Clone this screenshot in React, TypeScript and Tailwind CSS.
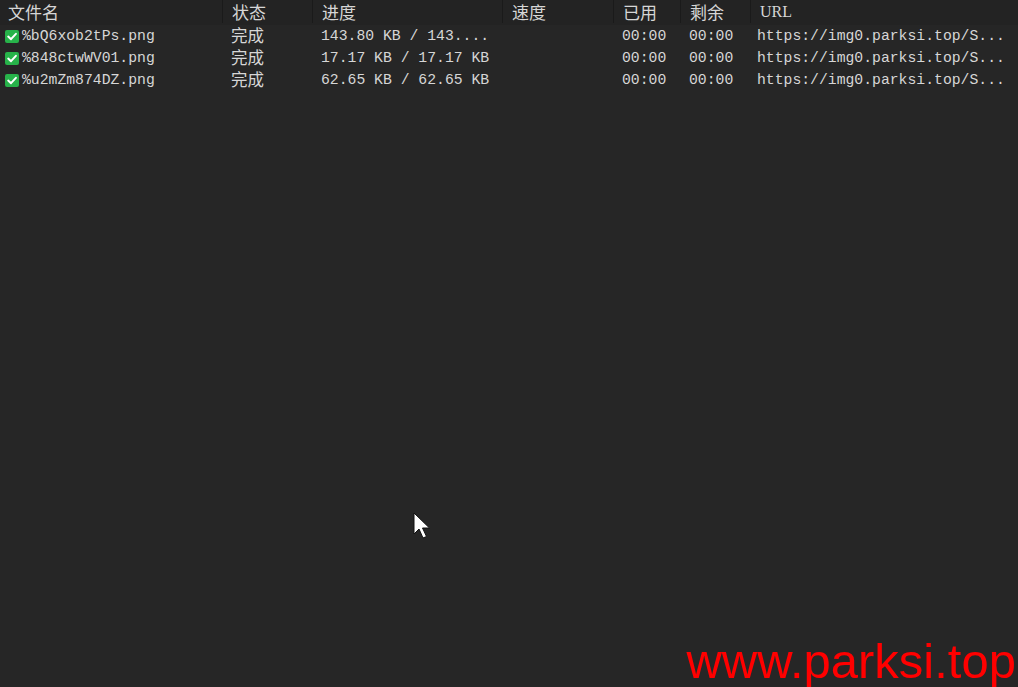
import React from 'react';

type Row = { name: string; status: string; progress: string; speed: string; used: string; left: string; url: string };

const rows: Row[] = [
  { name: '%bQ6xob2tPs.png', status: '完成', progress: '143.80 KB / 143....', speed: '', used: '00:00', left: '00:00', url: 'https://img0.parksi.top/S...' },
  { name: '%848ctwWV01.png', status: '完成', progress: '17.17 KB / 17.17 KB', speed: '', used: '00:00', left: '00:00', url: 'https://img0.parksi.top/S...' },
  { name: '%u2mZm874DZ.png', status: '完成', progress: '62.65 KB / 62.65 KB', speed: '', used: '00:00', left: '00:00', url: 'https://img0.parksi.top/S...' },
];

const headers = ['文件名', '状态', '进度', '速度', '已用', '剩余', 'URL'];
const widths = ['w-[222px]', 'w-[90px]', 'w-[190px]', 'w-[111px]', 'w-[67px]', 'w-[70px]', 'flex-1'];

const mono = "font-['Liberation_Mono',monospace] text-[14.75px]";
const cjk = "font-['Noto_Sans_CJK_SC',sans-serif] text-[17px]";

const CheckIcon: React.FC = () => (
  <svg width="14" height="13" viewBox="0 0 14 13" className="shrink-0">
    <rect x="0" y="0" width="14" height="13" rx="2" fill="#27b34a" />
    <path d="M3.2 6.6 L6 9.2 L10.9 3.8" stroke="#fff" strokeWidth="2" fill="none" strokeLinecap="round" strokeLinejoin="round" />
  </svg>
);

const Cursor: React.FC = () => (
  <svg width="20" height="30" viewBox="0 0 20 30" className="absolute left-[413px] top-[512px]">
    <path d="M1 1 L1 22 L6 17 L10 26 L13.5 24.5 L9.5 16 L16.5 16 Z" fill="#fff" stroke="#111" strokeWidth="1" />
  </svg>
);

export default function App() {
  return (
    <div className="relative w-[1018px] h-[687px] overflow-hidden bg-[#262626] text-[#d6d6d6]">
      {/* Header */}
      <div className="flex h-[25px] pb-[2px] bg-[#232323]">
        {headers.map((h, i) => (
          <div
            key={h}
            className={`${widths[i]} flex items-center ${i === 0 ? 'pl-[8px]' : 'pl-[9px] border-l border-[#1a1a1a]'} ${h === 'URL' ? "font-['Liberation_Serif',serif] text-[16px]" : cjk} leading-none`}
          >
            {h}
          </div>
        ))}
      </div>

      {/* Rows */}
      {rows.map((r) => (
        <div key={r.name} className={`flex h-[22px] items-center ${mono} leading-none`}>
          <div className="w-[222px] flex items-center gap-[3px] pl-[5px]">
            <CheckIcon />
            <span>{r.name}</span>
          </div>
          <div className="w-[90px] pl-[9px] pb-[3px] font-['Noto_Sans_CJK_SC',sans-serif] text-[16.5px] leading-[16px]">{r.status}</div>
          <div className="w-[190px] pl-[9px] whitespace-pre">{r.progress}</div>
          <div className="w-[111px] pl-[9px]">{r.speed}</div>
          <div className="w-[67px] pl-[9px]">{r.used}</div>
          <div className="w-[70px] pl-[9px]">{r.left}</div>
          <div className="flex-1 pl-[7px]">{r.url}</div>
        </div>
      ))}

      <Cursor />

      <div className="absolute right-[2px] bottom-[1px] font-['Liberation_Sans',Arial,sans-serif] text-[49px] leading-none text-[#ff0000]">
        www.parksi.top
      </div>
    </div>
  );
}
